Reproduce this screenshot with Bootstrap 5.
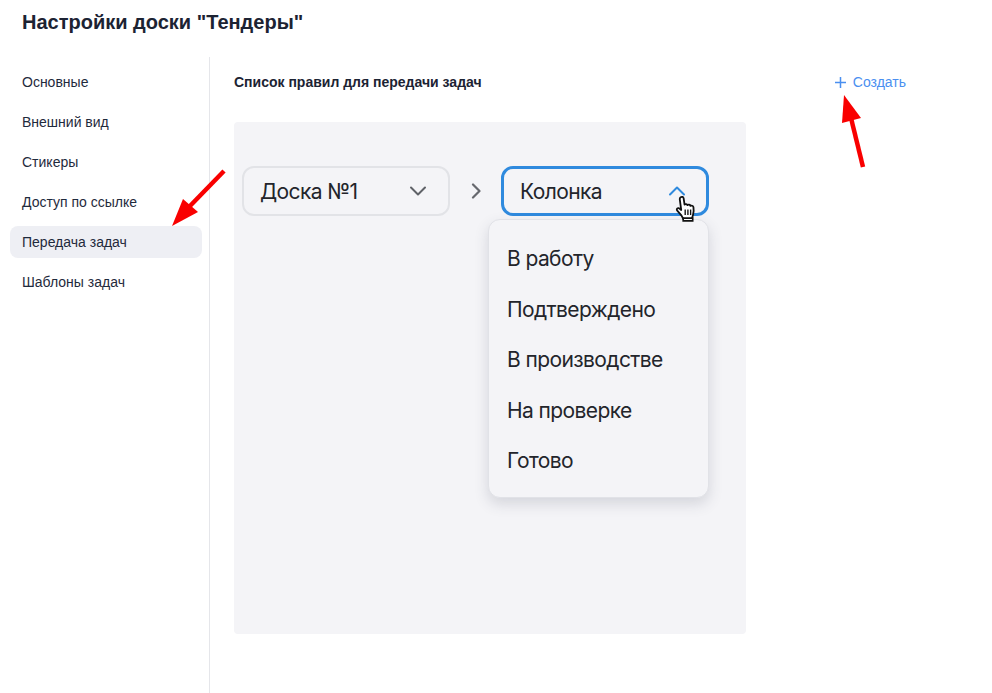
<!DOCTYPE html>
<html lang="ru">
<head>
<meta charset="utf-8">
<title>Настройки доски</title>
<link href="https://cdn.jsdelivr.net/npm/bootstrap@5.3.0/dist/css/bootstrap.min.css" rel="stylesheet">
<style>
html,body{height:693px;overflow:hidden;background:#fff}
body{font-family:"Liberation Sans",Arial,sans-serif;color:#1c2333;position:relative}
.top-title{height:57px;padding:10px 0 0 22px;margin:0;font-size:20px;line-height:25px;font-weight:700;color:#1c2333}
.shell{height:636px}
.side-col{width:210px;flex:none;border-right:1px solid #e5e6ea;padding:9px 7px 0 10px;height:636px}
.side-item{display:flex;align-items:center;height:32px;padding-left:12px;border-radius:8px;font-size:14px;color:#1f2a3c;margin-bottom:8px;text-decoration:none}
.side-item.on{background:#eeeff4}
.main-col{padding:9px 0 0 24px;width:782px}
.head-row{height:32px;width:672px;margin-bottom:24px}
.rule-title{font-size:14px;font-weight:700;color:#1c2333;margin:0;line-height:32px}
.make-link{font-size:14px;color:#4a8ff0;text-decoration:none;gap:7px}
.board{width:512px;height:512px;background:#f4f4f7;border-radius:4px;position:relative;padding:44px 37px 0 8px;font-family:Inter,"Noto Sans",sans-serif;color:#23252b}
.pick{height:50px;border-radius:12px;font-size:21px;padding:0 20px 0 17px;letter-spacing:-.6px}
.pick-a{width:208px;border:2px solid #e2e3e7;padding-right:21px}
.pick-a span{margin-top:1px;margin-left:-1px}
.pick-b{width:208px;border:3px solid #2f8ade;padding-left:15px;padding-right:20px;margin-left:-1px}
.pick-b span{margin-top:1px;margin-left:1px}
.sep{width:52px}
.drop-menu{position:absolute;left:254px;top:97px;width:221px;height:279px;background:#f4f4f7;border:1px solid #e1e2e7;border-radius:12px;box-shadow:0 6px 14px rgba(60,64,90,.17);padding:14px 0 0 18px;font-size:21px;letter-spacing:-.6px}
.drop-row{height:50.5px;line-height:50px}
.over-svg{position:absolute;pointer-events:none}
</style>
</head>
<body>
<h1 class="top-title">Настройки доски "Тендеры"</h1>
<div class="shell d-flex">
  <nav class="side-col">
    <a class="side-item" href="#">Основные</a>
    <a class="side-item" href="#">Внешний вид</a>
    <a class="side-item" href="#">Стикеры</a>
    <a class="side-item" href="#">Доступ по ссылке</a>
    <a class="side-item on" href="#">Передача задач</a>
    <a class="side-item" href="#">Шаблоны задач</a>
  </nav>
  <main class="main-col">
    <div class="head-row d-flex justify-content-between align-items-center">
      <h2 class="rule-title">Список правил для передачи задач</h2>
      <a class="make-link d-flex align-items-center" href="#">
        <svg width="11" height="11" viewBox="0 0 11 11"><path d="M5.500 0v11M0 5.500h11" stroke="#4a8ff0" stroke-width="1.500" fill="none"/></svg>
        Создать
      </a>
    </div>
    <div class="board">
      <div class="d-flex align-items-center">
        <div class="pick pick-a d-flex align-items-center justify-content-between">
          <span>Доска №1</span>
          <svg width="18" height="10" viewBox="0 0 18 10"><path d="M2 1.500l7 7 7-7" stroke="#5f6268" stroke-width="2" fill="none" stroke-linecap="round" stroke-linejoin="round"/></svg>
        </div>
        <div class="sep d-flex justify-content-center">
          <svg width="11" height="16" viewBox="0 0 11 16"><path d="M2 1.500l6.500 6.500L2 14.500" stroke="#66686e" stroke-width="2.200" fill="none" stroke-linecap="round" stroke-linejoin="round"/></svg>
        </div>
        <div class="pick pick-b d-flex align-items-center justify-content-between">
          <span>Колонка</span>
          <svg width="18" height="10" viewBox="0 0 18 10"><path d="M2 8.500l7-7 7 7" stroke="#2f8ade" stroke-width="2" fill="none" stroke-linecap="round" stroke-linejoin="round"/></svg>
        </div>
      </div>
      <div class="drop-menu">
        <div class="drop-row">В работу</div>
        <div class="drop-row">Подтверждено</div>
        <div class="drop-row">В производстве</div>
        <div class="drop-row">На проверке</div>
        <div class="drop-row">Готово</div>
      </div>
    </div>
  </main>
</div>
<svg class="over-svg" style="left:674px;top:195px" width="26" height="29" viewBox="0 0 28 32">
  <path d="M7 2.500c1.300-1 3-.4 3.300 1.200l1 7c1-1 2.700-.8 3.200.5 1-.9 2.800-.6 3.300.8 1.200-.7 3-.1 3.300 1.400.5 3 .3 6-.5 8.600l-1.300 4.500H10l-2.200-4-4.800-5.500c-.8-1.300.5-3 2-2.500l2.600 2L6 4.500C5.900 3.700 6.300 3 7 2.500z" fill="#fff" stroke="#111" stroke-width="2" stroke-linejoin="round"/>
  <path d="M9.800 25.500h10.500v3H9.800z" fill="#fff" stroke="#111" stroke-width="1.800"/>
  <path d="M12 16v6M15 16v6M18 16v6" stroke="#111" stroke-width="1.500"/>
</svg>
<svg class="over-svg" style="left:165px;top:165px" width="65" height="65" viewBox="165 165 65 65">
  <path d="M172 226L183 199 198 212z" fill="#f90000"/><path d="M224 171L189 207" stroke="#f90000" stroke-width="4.500"/>
</svg>
<svg class="over-svg" style="left:835px;top:90px" width="35" height="80" viewBox="835 90 35 80">
  <path d="M844 95L842 123 861 118z" fill="#f90000"/><path d="M863 167L851 118" stroke="#f90000" stroke-width="4.500"/>
</svg>
<script src="https://cdn.jsdelivr.net/npm/bootstrap@5.3.0/dist/js/bootstrap.bundle.min.js"></script>
</body>
</html>
